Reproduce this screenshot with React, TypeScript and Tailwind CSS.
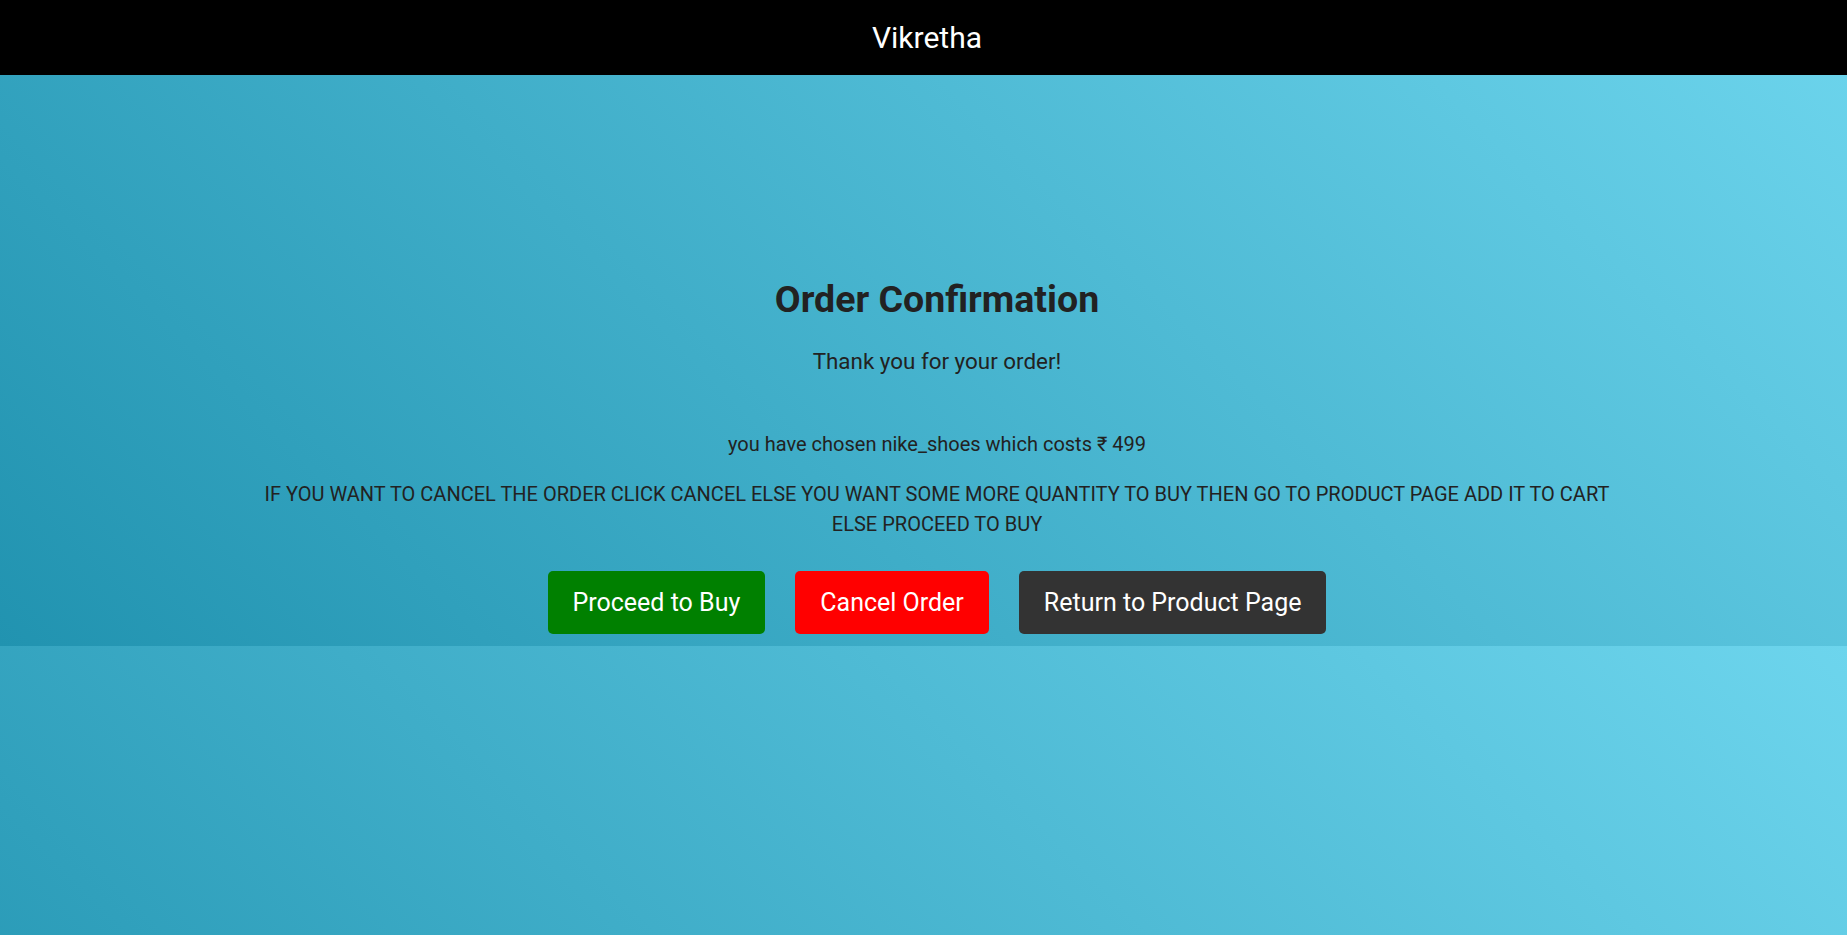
import React from 'react'

// Order confirmation page for the Vikretha store
const bg = 'bg-[linear-gradient(45deg,#2193b0,#6dd5ed)]'

function Header() {
  return (
    <header className="h-[75px] bg-black flex items-center justify-center pl-[7px]">
      <h1 className="text-white text-[30px] leading-[36px]">Vikretha</h1>
    </header>
  )
}

function OrderConfirmation() {
  const product = 'nike_shoes'
  const price = 499

  return (
    <main className="h-[571px] pt-[202px] pl-[27px] text-center text-[#222]">
      <h2 className="text-[37.5px] leading-[44px] font-bold">Order Confirmation</h2>
      <p className="mt-[26px] text-[22.4px] leading-[28px]">Thank you for your order!</p>
      <p className="mt-[57px] text-[20px] leading-[24px]">
        you have chosen {product} which costs ₹ {price}
      </p>
      <p className="mt-[23px] max-w-[1365px] mx-auto text-[20px] leading-[30px]">
        IF YOU WANT TO CANCEL THE ORDER CLICK CANCEL ELSE YOU WANT SOME MORE QUANTITY TO BUY THEN GO TO PRODUCT PAGE ADD IT TO CART ELSE PROCEED TO BUY
      </p>
      <div className="mt-[32px] flex justify-center gap-[30px]">
        <button className="h-[63px] px-[25px] rounded-[5px] bg-[#008000] text-white text-[25px]">
          Proceed to Buy
        </button>
        <button className="h-[63px] px-[25px] rounded-[5px] bg-[#ff0000] text-white text-[25px]">
          Cancel Order
        </button>
        <button className="h-[63px] px-[25px] rounded-[5px] bg-[#333333] text-white text-[25px]">
          Return to Product Page
        </button>
      </div>
    </main>
  )
}

export default function App() {
  return (
    <div className="h-screen overflow-hidden font-['Roboto',sans-serif]">
      <div className={bg}>
        <Header />
        <OrderConfirmation />
      </div>
      {/* body background repeats below the page content */}
      <div className={`h-[646px] ${bg}`} />
    </div>
  )
}
